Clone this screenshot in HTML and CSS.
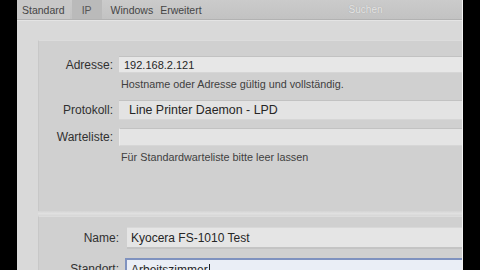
FILE: index.html
```html
<!DOCTYPE html>
<html lang="de">
<head>
<meta charset="utf-8">
<title>Drucker hinzufügen – IP</title>
<link rel="stylesheet" href="styles.css">
</head>
<body>
<div class="screen">
  <div class="letterbox"></div>
  <div class="window">
    <div class="toolbar">
      <div class="tabs">
        <span class="tab tab-standard">Standard</span>
        <span class="tab tab-ip">IP</span>
        <span class="tab tab-windows">Windows</span>
        <span class="tab">Erweitert</span>
      </div>
      <div class="search">Suchen</div>
    </div>
    <div class="content">
      <div class="panel panel-top">
        <div class="row row-address">
          <label class="label">Adresse:</label>
          <div class="field field-address">192.168.2.121</div>
        </div>
        <div class="hint">Hostname oder Adresse gültig und vollständig.</div>
        <div class="row row-protocol">
          <label class="label">Protokoll:</label>
          <div class="field field-popup">Line Printer Daemon - LPD</div>
        </div>
        <div class="row row-queue">
          <label class="label">Warteliste:</label>
          <div class="field field-queue"></div>
        </div>
        <div class="hint">Für Standardwarteliste bitte leer lassen</div>
      </div>
      <div class="separator"></div>
      <div class="panel panel-bottom">
        <div class="row row-name">
          <label class="label label-wide">Name:</label>
          <div class="field field-name">Kyocera FS-1010 Test</div>
        </div>
        <div class="row row-location">
          <label class="label label-wide">Standort:</label>
          <div class="field field-location">Arbeitszimmer<span class="caret"></span></div>
        </div>
      </div>
    </div>
  </div>
  <div class="letterbox"></div>
</div>
</body>
</html>
```

FILE: styles.css
```css
* { box-sizing: border-box; }

html, body {
  margin: 0;
  padding: 0;
  background: #000;
}

body {
  width: 480px;
  height: 270px;
  overflow: hidden;
  font-family: "Liberation Sans", Arial, sans-serif;
  color: #2e2e2e;
}

.screen {
  display: flex;
  width: 480px;
  height: 270px;
}

.letterbox {
  width: 17px;
  flex: none;
  background: #000;
}

.window {
  flex: 1;
  display: flex;
  flex-direction: column;
  overflow: hidden;
  background: #d9d9d9;
  border-right: 1px solid #f2f2f2;
}

.toolbar {
  height: 20px;
  flex: none;
  display: flex;
  align-items: center;
  background: linear-gradient(#cbcbcb, #c2c2c2);
  border-bottom: 1px solid #b2b2b2;
  box-shadow: 0 1px 0 #e4e4e4;
}

.tabs {
  display: flex;
  align-items: stretch;
  height: 19px;
}

.tab {
  display: flex;
  align-items: center;
  font-size: 10.5px;
  color: #454545;
  padding: 0 4px;
}

.tab-standard {
  padding-left: 5px;
  padding-right: 5px;
  background: #c8c8c8;
}

.tab-ip {
  margin-left: 2px;
  padding-left: 10px;
  padding-right: 10px;
  background: #bababa;
  color: #555;
}

.tab-windows {
  margin-left: 5px;
  margin-right: 0;
}

.tab-windows + .tab {
  padding-left: 3px;
}

.search {
  margin-left: 143px;
  font-size: 10px;
  color: #e6e6e6;
  text-shadow: 0 0 1px #9a9a9a;
}

.content {
  flex: 1;
  padding-top: 20px;
  padding-left: 21px;
  display: flex;
  flex-direction: column;
}

.panel {
  background: #d0d0d0;
  border-left: 1px solid #c8c8c8;
  border-top: 1px solid #dcdcdc;
}

.panel-top {
  height: 171px;
  padding-top: 15px;
}

.separator {
  height: 5px;
  flex: none;
  background: linear-gradient(#d4d4d4, #e0e0e0 50%, #d6d6d6);
}

.panel-bottom {
  flex: 1;
  padding-top: 10px;
}

.row {
  display: flex;
  align-items: center;
}

.label {
  width: 80px;
  flex: none;
  text-align: right;
  font-size: 12px;
  color: #303030;
  padding-right: 6px;
}

.label-wide {
  width: 88px;
  padding-right: 8px;
}

.field {
  flex: 1;
  align-self: stretch;
  display: flex;
  align-items: center;
  background: #e7e7e7;
  border-top: 1px solid #c2c2c2;
  border-bottom: 1px solid #d6d6d6;
  font-size: 11px;
  color: #262626;
  padding-left: 5px;
  white-space: nowrap;
}

.row-address { height: 17px; }

.hint {
  height: 27px;
  padding-top: 5px;
  padding-left: 82px;
  font-size: 10.8px;
  line-height: 13px;
  color: #404040;
}

.row-protocol { height: 20px; }

.field-popup {
  background: #e3e3e3;
  padding-left: 10px;
  font-size: 12.4px;
}

.row-queue {
  height: 18px;
  margin-top: 8px;
}

.field-queue {
  background: #e4e4e4;
  border-left: 1px solid #ececec;
}

.row-name { height: 22px; }

.field-name {
  background: #e5e5e5;
  font-size: 12px;
  padding-left: 4px;
  border-top: 1px solid #d8d8d8;
  border-bottom: 2px solid #c4c4c4;
}

.row-location {
  height: 22px;
  margin-top: 9px;
}

.field-location {
  margin-left: -2px;
  background: #eaeef6;
  border: 2px solid #7f92bf;
  border-right: none;
  border-bottom: none;
  font-size: 12px;
  padding-left: 4px;
}

.caret {
  display: inline-block;
  width: 1px;
  height: 13px;
  background: #222;
  margin-left: 1px;
}
```
